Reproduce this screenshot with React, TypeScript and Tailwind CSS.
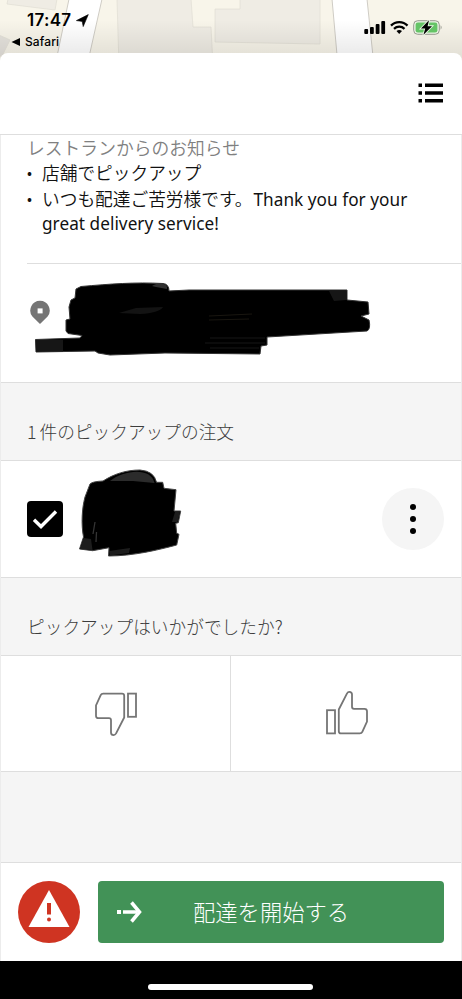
import { ReactNode } from "react";

const MapBackdrop = () => {
  return (
    <svg viewBox="0 0 462 66" className="absolute inset-0 w-full h-[66px]">
      <defs>
        <linearGradient id="map-shade" x1="0" y1="0" x2="0" y2="1">
          <stop offset="0.3" stopColor="#000" stopOpacity="0" />
          <stop offset="0.82" stopColor="#000" stopOpacity="0.08" />
        </linearGradient>
      </defs>
      <rect width="462" height="66" fill="#f8f5ea" />
      <g fill="#efece4" stroke="#e2dfd6" strokeWidth="0.8">
        <path d="M8 -1 L7 4 L55 10 L57 -1 Z" />
        <path d="M-1 35 L10 40 L2 56 L-1 56 Z" fill="#e6e3dd" />
        <path d="M117 -1 L119 66 H213 L211 27 H193 L191 -1 Z" />
        <path d="M240 -1 V9 H215 V42 L320 44 V-1 Z" />
      </g>
      <g fill="#fff" stroke="#cfccc5">
        <path d="M69 -1 L55 66 H87 L102 -1 Z" />
        <path d="M332 -1 L338 66 H374 L367 -1 Z" />
      </g>
      <rect width="462" height="66" fill="url(#map-shade)" />
    </svg>
  );
};

const StatusIcons = () => {
  return (
    <svg viewBox="0 0 80 16" className="w-20 h-4">
      <rect x="0.3" y="9" width="3.8" height="5" rx="1" />
      <rect x="6" y="7" width="3.8" height="7" rx="1" />
      <rect x="11.7" y="4" width="3.8" height="10" rx="1" />
      <rect x="17.3" y="1" width="3.8" height="13" rx="1" />
      <g fill="none" stroke="#000" strokeWidth="2.3">
        <path d="M27 5.6 C31.5 0.9 39 0.9 43.5 5.6" />
        <path d="M30 8.8 C33 6 37.5 6 40.5 8.8" />
      </g>
      <path d="M32.5 11 Q35.2 9 38 11 L35.2 14 Z" />
      <rect x="49.7" y="0.7" width="25.6" height="13.6" rx="4" fill="#e9f2e2" stroke="#97998f" />
      <path d="M76.6 5.3 Q78.6 7.5 76.6 9.7 Z" fill="#97998f" />
      <rect x="51.6" y="2.5" width="21.8" height="10" rx="2.3" fill="#65c466" />
      <path
        d="M65 0.2 L57 8.6 H61.2 L59.5 14.8 L68 6.2 H63.6 Z"
        stroke="#e9f2e2"
        strokeWidth="1.8"
        paintOrder="stroke"
      />
    </svg>
  );
};

const ListIcon = () => {
  return (
    <svg viewBox="0 0 26 20" className="w-[26px] h-5">
      <path d="M0.5 0.5h3.5v3.5h-3.5z M7 0.5h18v3.5h-18z M0.5 8.3h3.5v3.5h-3.5z M7 8.3h18v3.5h-18z M0.5 16h3.5v3.5h-3.5z M7 16h18v3.5h-18z" />
    </svg>
  );
};

const ThumbIcon = ({ className }: { className?: string }) => {
  return (
    <svg viewBox="0 0 42 44" className={`w-[42px] h-11 ${className ?? ""}`}>
      <g fill="none" stroke="#757575" strokeWidth="1.8">
        <rect x="1" y="19.2" width="8" height="23.2" />
        <path d="M12.8 18.5 L20.9 2.6 Q21.9 0.9 23.3 0.9 Q26 0.9 26 3.5 V15.8 Q26 17.8 28 17.8 H38.5 Q41 17.8 41 20.3 V30.5 L36.3 40.8 Q35.6 42.4 33.8 42.4 H15 Q12.8 42.4 12.8 40.2 Z" />
      </g>
    </svg>
  );
};

const AddressScribble = () => {
  return (
    <svg viewBox="0 0 342 78" className="w-[342px] h-[78px]">
      <path
        d="M0.5 59.5 L45 58 L47 55.5 L33 53.5 L31 51 V40 L35 39 L34 27 L36 20 L40 18 L41 9 L46 6.5 C75 4 100 2 128 3.5 Q134 4 134 11 L154 10 H312 V20 L333 22 L334 34 L326 36 L334 40 Q336 49 332 51 L232 57 V65 L226 66 L225 74 L130 73 L75 75 L63 73 L60 71 L1 72 Z"
        fill="#000"
        stroke="#333"
      />
      <path d="M0.8 60 H28 V71.5 H1 Z M294 11 H311 V20 L299 21 Z" fill="#161616" />
      <path d="M117 6 C124 2 133 3 132 9 L121 7 Z" fill="#303030" />
      <path d="M84 33 L101 28 L128 27 Q124 33 105 34 Z" fill="#131313" />
      <path d="M174 36 L217 34 M174 40 L214 39" stroke="#191610" fill="none" />
      <path d="M175 58 H230 M170 63 H230 M175 68 H224" stroke="#171717" fill="none" />
    </svg>
  );
};

const NameScribble = () => {
  return (
    <svg viewBox="0 0 104 90" className="w-[104px] h-[90px]">
      <path
        d="M1.5 81 L5.5 69 C3 56 4 40 7 29 L12 16 Q14 13.5 25 13 C36 6 48 2 62 2 Q76 3 78.5 14.3 L84.7 14.3 L86 20.3 L98 21.7 L96 43 L102.7 43 L100.3 54.7 L97.7 55.3 L98.7 65.3 L101 66.3 L98.7 77 C80 82 55 88 30.5 88 L31 79.7 L14.7 82.7 Z"
        fill="#000"
        stroke="#444"
      />
      <path d="M32 13 C46 2 73 -1 76.5 15 L55 13 Z" fill="#2b2b2b" />
      <path d="M5.5 70 L13 71 L14.5 82 L2 81 Z M31 83 L52 80 L51 85 L32 87.5 Z M97 44 L102 44 L99.5 54 L94 54 Z" fill="#1d1d1d" />
      <path d="M17 54 L15 66 M18.5 64 L18 74" stroke="#343434" strokeWidth="1.3" fill="none" />
    </svg>
  );
};

const SectionTitle = ({ children }: { children: ReactNode }) => {
  return (
    <div className="flex items-end h-[78px] shrink-0 pl-[26px] pb-[15px] bg-[#f5f5f5] border-b border-[#dedede]">
      <p className="text-[17.7px] leading-7 font-light text-[#3c3c3c] whitespace-nowrap">
        {children}
      </p>
    </div>
  );
};

export default function App() {
  return (
    <div className="relative flex flex-col w-[462px] h-[999px] overflow-hidden bg-white text-black font-['Noto_Sans_CJK_JP',sans-serif]">
      <MapBackdrop />
      <div className="relative flex justify-between h-[53px] shrink-0 pl-[11px] font-['Inter',sans-serif]">
        <div>
          <div className="flex items-center gap-[5px] pt-[9px] pl-4">
            <span className="text-[17px] leading-[22px] font-semibold tracking-[0.3px]">17:47</span>
            <svg viewBox="0 0 13 13" className="w-[13px] h-[13px]">
              <path d="M0.4 6.6 L12.3 0.6 L7.2 12.6 L6.2 7.4 Z" stroke="#000" strokeWidth="0.6" />
            </svg>
          </div>
          <div className="flex items-center gap-[5px] mt-[3px]">
            <svg viewBox="0 0 9 8" className="w-[9px] h-2">
              <path d="M0.5 4 L9 0 V8 Z" />
            </svg>
            <span className="text-[12px] leading-4 font-medium tracking-[0.1px]">Safari</span>
          </div>
        </div>
        <div className="pt-5 w-[98px]">
          <StatusIcons />
        </div>
      </div>

      <header className="relative flex items-center justify-end h-[82px] shrink-0 pr-[18px] pb-0.5 bg-white border-b border-[#dedede] rounded-t-[8px]">
        <ListIcon />
      </header>

      <main className="relative flex flex-col flex-1 border-x border-[#ececec]">
        <section className="h-[248px] shrink-0 bg-white border-b border-[#dedede] rounded-t-md">
          <div className="h-[129px] ml-[26px] border-b border-[#dedede]">
            <p className="text-[17.8px] leading-6 font-[350] text-[#808080]">レストランからのお知らせ</p>
            <ul className="text-[17.7px] leading-6 font-[350] text-[#111]">
              <li className="flex mt-px">
                <span className="w-[15px] text-[15px]">•</span>
                <span>店舗でピックアップ</span>
              </li>
              <li className="flex mt-[2px]">
                <span className="w-[15px] text-[15px]">•</span>
                <div className="whitespace-nowrap">
                  <p>
                    いつも配達ご苦労様です。
                    <span className="ml-px text-[17.2px] tracking-[0.04px] font-normal font-['Noto_Sans',sans-serif]">
                      Thank you for your
                    </span>
                  </p>
                  <p className="text-[17.2px] tracking-[0.04px] font-normal font-['Noto_Sans',sans-serif]">
                    great delivery service!
                  </p>
                </div>
              </li>
            </ul>
          </div>
          <div className="flex pl-[29px] pt-4">
            <svg viewBox="0 0 20 25" className="w-5 h-[25px] mt-5 -mr-[25px]">
              <path d="M10 0.8 A9.7 9.7 0 0 1 17.6 16.5 L10 24 L2.4 16.5 A9.7 9.7 0 0 1 10 0.8 Z" fill="#757575" />
              <rect x="7.6" y="8.4" width="5" height="5" fill="#fff" />
            </svg>
            <div className="ml-[10px]">
              <AddressScribble />
            </div>
          </div>
        </section>

        <SectionTitle>
          <span className="inline-block mr-[3px]">1</span>件のピックアップの注文
        </SectionTitle>

        <section className="flex items-center h-[117px] shrink-0 pl-[26px] pr-[17px] bg-white border-b border-[#dedede]">
          <div className="flex items-center justify-center w-9 h-9 bg-black rounded">
            <svg viewBox="0 0 36 36" className="w-9 h-9">
              <path d="M7 18.8 L14 25.5 L29 10.5" fill="none" stroke="#fff" strokeWidth="3.4" />
            </svg>
          </div>
          <div className="ml-[15px] -mt-3">
            <NameScribble />
          </div>
          <button className="flex flex-col items-center justify-center gap-1.5 w-[62px] h-[62px] ml-auto bg-[#f5f5f5] rounded-full">
            <span className="w-1.5 h-1.5 bg-black rounded-full" />
            <span className="w-1.5 h-1.5 bg-black rounded-full" />
            <span className="w-1.5 h-1.5 bg-black rounded-full" />
          </button>
        </section>

        <SectionTitle>ピックアップはいかがでしたか?</SectionTitle>

        <section className="flex h-[116px] shrink-0 bg-white border-b border-[#dedede]">
          <button className="flex items-center justify-center w-[230px] border-r border-[#dedede]">
            <ThumbIcon className="rotate-180" />
          </button>
          <button className="flex items-center justify-center flex-1 pb-0.5 pl-px">
            <ThumbIcon />
          </button>
        </section>

        <div className="flex-1 bg-[#f5f5f5]" />

        <footer className="flex items-center h-[99px] shrink-0 px-[17px] bg-white border-t border-[#dedede]">
          <svg viewBox="0 0 63 63" className="w-[63px] h-[63px]">
            <circle cx="31" cy="31" r="31" fill="#cf3422" />
            <path d="M31 9 L51.5 46 H10.5 Z" fill="#fff" />
            <path d="M29 22 H33 V33.5 H29 Z" fill="#cf3422" />
            <circle cx="31" cy="38.5" r="2" fill="#cf3422" />
          </svg>
          <button className="flex items-center flex-1 h-[62px] ml-[17px] pl-[19px] bg-[#429257] rounded text-white">
            <svg viewBox="0 0 25 22" className="w-[25px] h-[22px]">
              <path d="M0 9 H4 V13 H0 Z M6 9.2 H20 V12.8 H6 Z" fill="#fff" />
              <path d="M14.5 1.5 L22.5 11 L14.5 20.5" fill="none" stroke="#fff" strokeWidth="3.5" />
            </svg>
            <span className="ml-[51px] mb-[3px] text-[22.3px] leading-8 font-light">配達を開始する</span>
          </button>
        </footer>
      </main>

      <div className="relative flex items-start justify-center h-[38px] shrink-0 pt-[23px] pr-px bg-black">
        <div className="w-[165px] h-1.5 bg-white rounded-full" />
      </div>
    </div>
  );
}
